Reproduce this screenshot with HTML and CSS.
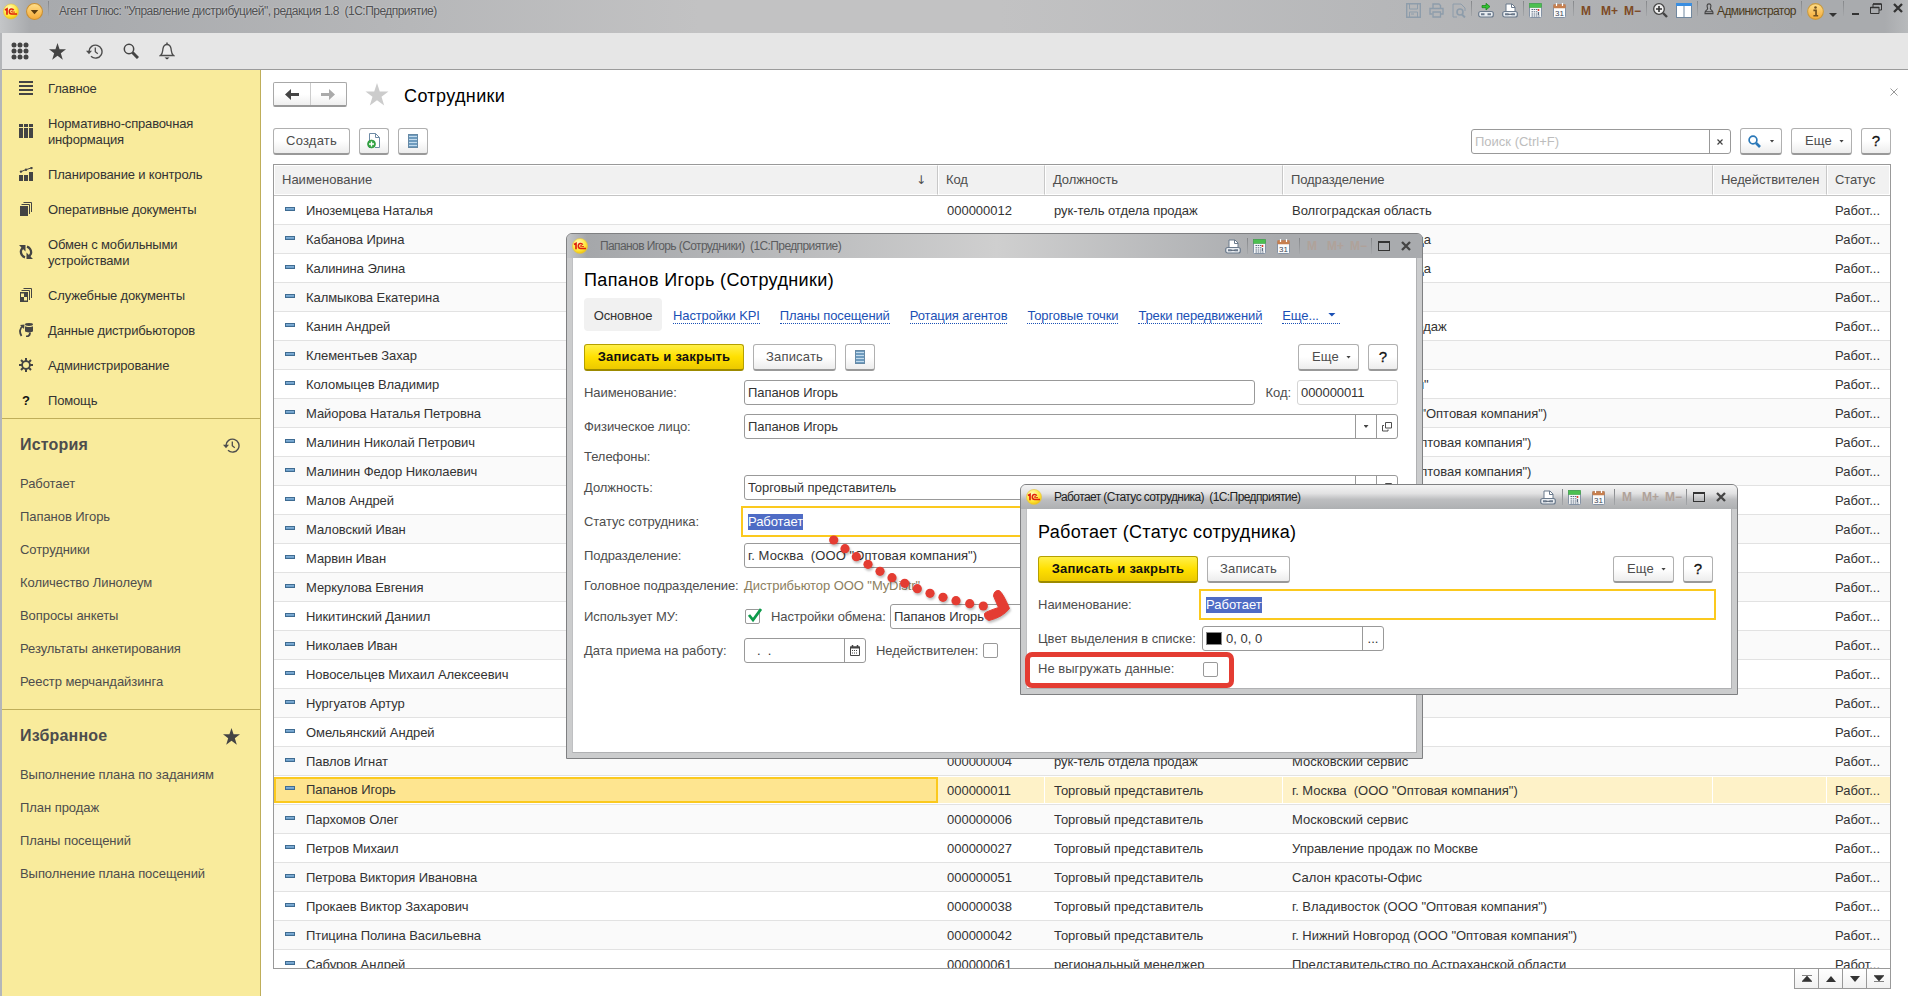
FILE: index.html
```html
<!DOCTYPE html>
<html lang="ru">
<head>
    <meta charset="UTF-8">
    <title>Агент Плюс: Сотрудники</title>
    <link rel="stylesheet" href="styles.css">
</head>
<body>
<svg class="defs" width="0" height="0">
    <defs>
        <radialGradient id="gold" cx=".4" cy=".3" r=".8"><stop offset="0" stop-color="#fffbc0"/><stop offset=".6" stop-color="#ffe638"/><stop offset="1" stop-color="#e8b400"/></radialGradient>
        <linearGradient id="orange" x1="0" y1="0" x2="0" y2="1"><stop offset="0" stop-color="#ffdf8a"/><stop offset="1" stop-color="#f5a936"/></linearGradient>
        <linearGradient id="blue" x1="0" y1="0" x2="0" y2="1"><stop offset="0" stop-color="#8fb8dc"/><stop offset="1" stop-color="#5f96c4"/></linearGradient>
    </defs>
    <symbol id="logo" viewBox="0 0 16 16"><circle cx="8" cy="8" r="7.6" fill="url(#gold)" stroke="#e2c24a" stroke-width=".6"/><path d="M2 6.500 4 5.500v5.700" fill="none" stroke="#e0200c" stroke-width="1.700"/><path d="M10.700 6.800C10 5 6.300 4.800 6.300 8c0 2 1.200 2.500 2.400 2.500H14" fill="none" stroke="#e0200c" stroke-width="1.500"/><path d="M10 7.800c-.6-.6-1.600-.4-1.600.2 0 .5.3.6.800.6H12" fill="none" stroke="#e0200c" stroke-width=".9"/></symbol>
    <symbol id="star" viewBox="0 0 24 24"><path d="M12 0l2.900 8.800H24l-7.300 5.500L19.500 23.500 12 18l-7.500 5.500 2.800-9.200L0 8.800h9.100z"/></symbol>
    <symbol id="history" viewBox="0 0 17 17"><path d="M3 8.500a6.500 6.500 0 1 1 2 4.800" fill="none" stroke="#4d4d4d" stroke-width="1.400"/><path d="M0 7.800h6L3 11.300z" fill="#4d4d4d"/><path d="M9.300 4.500v4.300l2.500 2" fill="none" stroke="#4d4d4d" stroke-width="1.300"/></symbol>
    <symbol id="printer" viewBox="0 0 16 15"><path d="M4 8V1h6l3 3v4" fill="#fff" stroke="#6b7a8c"/><path d="M9.500 1v3.500H13" fill="none" stroke="#6b7a8c"/><rect x=".7" y="8.500" width="14.600" height="5.500" rx="2" fill="#e8ecf0" stroke="#6b7a8c" stroke-width="1.200"/><path d="M3 11.300h3.500M9.500 11.300H13" stroke="#6b7a8c" stroke-width="2"/><path d="M6 11.300h4" stroke="#4d5b6c"/></symbol>
    <symbol id="linkgo" viewBox="0 0 16 15"><path d="M4 2.500h4V.3L12 3.600 8 7V4.700H4z" fill="#2fc42f" stroke="#168016" stroke-width=".7"/><rect x=".7" y="8.500" width="14.600" height="5.500" rx="2" fill="#e8ecf0" stroke="#6b7a8c" stroke-width="1.200"/><path d="M3 11.300h3.500M9.500 11.300H13" stroke="#6b7a8c" stroke-width="2"/></symbol>
    <symbol id="calc" viewBox="0 0 13 15"><rect x=".5" y=".5" width="12" height="14" rx="1" fill="#f4f6f8" stroke="#8492a4"/><rect x=".5" y=".5" width="12" height="4" fill="#4cc050" stroke="#3ca044" stroke-width=".6"/><path d="M2.500 6.500h6M2.500 8.800h6M2.500 11h6M2.500 13h8" stroke="#5c6c80" stroke-dasharray="1.500 .7"/><path d="M9.500 6v2" stroke="#e04030" stroke-width="1.500"/><path d="M9.500 9v3" stroke="#5c6c80" stroke-width="1.200"/></symbol>
    <symbol id="cal" viewBox="0 0 13 15"><rect x=".5" y="1.500" width="12" height="13" rx="1" fill="#fafbfc" stroke="#8492a4"/><rect x=".3" y="1.200" width="12.400" height="4" rx=".8" fill="#c77f4e"/><path d="M3.500 0v3M9.500 0v3" stroke="#fff" stroke-width="1.200"/><text x="6.500" y="12.800" font-size="8" text-anchor="middle" fill="#3c4654" font-family="Liberation Sans">31</text></symbol>
    <symbol id="list" viewBox="0 0 10 14"><rect x=".5" y=".5" width="9" height="13" fill="#6f9cbf" stroke="#6689a5"/><path d="M1 2.500h8M1 5.500h8M1 8.500h8M1 11.500h8" stroke="#c3dbed" stroke-width="1.200"/></symbol>
    <symbol id="open" viewBox="0 0 10 10"><path d="M3.500.5h6v5.500h-6z M2 3.500H.5v5.500h5.500V7.500" fill="none" stroke="#4d4d4d"/></symbol>
</svg>

<div class="app">
    <header class="titlebar">
        <svg class="app-logo"><use href="#logo"/></svg>
        <svg class="app-menu" viewBox="0 0 16 16"><circle cx="8" cy="8" r="7.500" fill="url(#orange)" stroke="#c98f33"/><path d="M4.500 6.500h7L8 10.500z" fill="#5c3d10"/></svg>
        <span class="sep"></span>
        <span class="app-title">Агент Плюс: "Управление дистрибуцией", редакция 1.8&nbsp; (1С:Предприятие)</span>
        <div class="tools">
            <svg class="faded" width="15" height="15" viewBox="0 0 15 15" fill="none" stroke="#5f7f9c"><path d="M.7.700h13.600v13.600H.7z" stroke-width="1.400"/><path d="M3.500 1v5h8V1M3.500 14V9h8v5M5 11h3"/></svg>
            <svg class="faded gap8" width="15" height="15" viewBox="0 0 15 15" fill="none" stroke="#5f7f9c"><path d="M4 5V1h6l1.500 1.500V5M3.500 11H1V5.500h13V11h-2.500" stroke-width="1.400"/><path d="M4 9h7.500v5H4z" stroke-width="1.300"/></svg>
            <svg class="faded gap8" width="14" height="15" viewBox="0 0 14 15" fill="none" stroke="#5f7f9c"><path d="M5 14H1V1h8l4 4v3"/><circle cx="8" cy="9" r="3" stroke-width="1.600"/><path d="M10 11.500l3 3" stroke-width="2"/></svg>
            <span class="sep s1"></span>
            <svg class="gap6" width="16" height="15"><use href="#linkgo"/></svg>
            <svg class="gap8" width="16" height="15"><use href="#printer"/></svg>
            <span class="sep s2"></span>
            <svg class="gap5" width="13" height="15"><use href="#calc"/></svg>
            <svg class="gap11" width="13" height="15"><use href="#cal"/></svg>
            <span class="sep s3"></span>
            <span class="mem m1">M</span><span class="mem m2">M+</span><span class="mem m3">M−</span>
            <span class="sep s4"></span>
            <svg class="gap6" width="15" height="15" viewBox="0 0 15 15"><circle cx="6" cy="6" r="5.300" fill="#eee" stroke="#444" stroke-width="1.300"/><path d="M3 6h6M6 3v6" stroke="#333" stroke-width="1.600"/><path d="M10 10l4 4" stroke="#444" stroke-width="2.400"/></svg>
            <svg class="gap8" width="16" height="15" viewBox="0 0 16 15"><rect x=".5" y=".5" width="15" height="14" fill="#fff" stroke="#71889f"/><path d="M0 1.500h16" stroke="#3a8ee0" stroke-width="3"/><path d="M8 3v12" stroke="#71889f"/></svg>
            <span class="sep s5"></span>
            <svg class="gap6" width="10" height="12" viewBox="0 0 10 13" fill="none" stroke="#444" stroke-width="1.200"><path d="M5 1C2 1 3 4 3.500 6 3.700 8 .700 7.500.700 10.500v1h8.600v-1C9.300 7.500 6.300 8 6.500 6 7 4 8 1 5 1zM1 9.500h8"/></svg>
            <span class="user">Администратор</span>
            <span class="sep s6"></span>
            <svg class="gap5" width="17" height="17" viewBox="0 0 16 16"><circle cx="8" cy="8" r="7.400" fill="url(#orange)" stroke="#c99a3f"/><path d="M6 7h2.500v5M6 12h4.500" fill="none" stroke="#705020" stroke-width="1.600"/><circle cx="8" cy="4.300" r="1.200" fill="#705020"/></svg>
            <svg class="gap5 low" width="8" height="4" viewBox="0 0 8 4"><path d="M0 0h8L4 4z" fill="#333"/></svg>
            <span class="sep s7"></span>
            <svg class="gap8 low2" width="7" height="2"><path d="M0 0h7v2H0z" fill="#333"/></svg>
            <svg class="gap12" width="12" height="11" viewBox="0 0 12 11" fill="none" stroke="#333"><path d="M3 4V1h8.500v6H9" /><path d="M3 1h8.500M.5 4.500h8.500" stroke-width="1.500"/><path d="M.5 4v6.500H9V4"/></svg>
            <svg class="gap12" width="10" height="10" viewBox="0 0 10 10"><path d="M1 1l8 8M9 1L1 9" stroke="#333" stroke-width="2.300"/></svg>
        </div>
    </header>

    <div class="toolbar">
        <svg width="18" height="18" viewBox="0 0 18 18" fill="#444"><circle cx="3" cy="3" r="2.500"/><circle cx="9" cy="3" r="2.500"/><circle cx="15" cy="3" r="2.500"/><circle cx="3" cy="9" r="2.500"/><circle cx="9" cy="9" r="2.500"/><circle cx="15" cy="9" r="2.500"/><circle cx="3" cy="15" r="2.500"/><circle cx="9" cy="15" r="2.500"/><circle cx="15" cy="15" r="2.500"/></svg>
        <svg width="17" height="17" fill="#444"><use href="#star"/></svg>
        <svg width="17" height="17"><use href="#history"/></svg>
        <svg width="16" height="16" viewBox="0 0 16 16" fill="none" stroke="#444"><circle cx="6" cy="6" r="4.700" stroke-width="1.500"/><path d="M9.500 9.500l5.500 5.500" stroke-width="3"/></svg>
        <svg width="16" height="18" viewBox="0 0 16 18"><path d="M1.500 13.500C4 11.500 3.500 9 4 6.500 4.500 4 6 2.500 8 2.500s3.500 1.500 4 4c.5 2.500 0 5 2.500 7z" fill="#ececec" stroke="#4d4d4d" stroke-width="1.300"/><path d="M8 .5v2" stroke="#4d4d4d" stroke-width="1.500"/><path d="M5.500 15.500h5L8 17.500z" fill="#333"/></svg>
    </div>

    <div class="workspace">
        <nav class="sidebar">
            <ul class="sections">
                <li><svg viewBox="0 0 14 14"><path d="M0 1h14M0 5h14M0 9h14M0 13h14" stroke="#444" stroke-width="2"/></svg><span>Главное</span></li>
                <li><svg viewBox="0 0 14 14" fill="#444"><path d="M0 0h4v3H0zM5 0h4v3H5zM10 0h4v3h-4zM0 4h4v10H0zM5 4h4v10H5zM10 4h4v10h-4z"/></svg><span>Нормативно-справочная<br>информация</span></li>
                <li><svg viewBox="0 0 14 14" fill="#444"><path d="M0 8h4v6H0zM5 8h4v6H5zM10 5h4v9h-4z"/><path d="M1 5l5-2 6-2" fill="none" stroke="#444"/><circle cx="2" cy="4.600" r="1.200"/><circle cx="7" cy="2.800" r="1.200"/><circle cx="12.500" cy="1" r="1.200"/></svg><span>Планирование и контроль</span></li>
                <li><svg viewBox="0 0 14 14"><path d="M1 4h8v10H1z" fill="#444"/><path d="M2.500 2.500h8V12M4.500.500h8V10" fill="none" stroke="#444"/></svg><span>Оперативные документы</span></li>
                <li><svg viewBox="0 0 14 14"><path d="M5.500 1.800C2 3 .800 7 3 10.200c.8 1.200 1.700 1.800 3 2.200M8.500 12.200C12 11 13.200 7 11 3.800 10.200 2.600 9.300 2 8 1.600" fill="none" stroke="#444" stroke-width="2.300"/><path d="M0 0h6.500v6.500zM14 14H7.500V7.500z" fill="#444"/></svg><span>Обмен с мобильными<br>устройствами</span></li>
                <li><svg viewBox="0 0 14 14"><path d="M1 4h8v10H1z" fill="#444"/><path d="M2 5.500h3V9H2zM5 9h3v3.500H5z" fill="#f9eb9c"/><path d="M2.500 2.500h8V12M4.500.500h8V10" fill="none" stroke="#444"/></svg><span>Служебные документы</span></li>
                <li><svg viewBox="0 0 14 14"><path d="M4 3C.5 5 .2 9.500 2.500 13M7 13.500c3 0 4-2 4-4" fill="none" stroke="#444" stroke-width="1.800"/><path d="M1 2l4.500-.5L5 6z" fill="#444"/><ellipse cx="10" cy="1.500" rx="4" ry="1.400" fill="#444"/><path d="M6 3.300c1 1 7 1 8 0v5c-1 1.500-7 1.500-8 0z" fill="#444"/></svg><span>Данные дистрибьюторов</span></li>
                <li><svg viewBox="0 0 14 14"><circle cx="7" cy="7" r="3.900" fill="none" stroke="#444" stroke-width="1.800"/><path d="M7 0v3M7 11v3M0 7h3M11 7h3M2 2l2.200 2.200M9.800 9.800L12 12M12 2L9.800 4.200M4.200 9.800L2 12" stroke="#444" stroke-width="2"/></svg><span>Администрирование</span></li>
                <li><b class="help">?</b><span>Помощь</span></li>
            </ul>
            <section class="side-block history">
                <h2>История<svg width="17" height="17"><use href="#history"/></svg></h2>
                <ul>
                    <li>Работает</li>
                    <li>Папанов Игорь</li>
                    <li>Сотрудники</li>
                    <li>Количество Линолеум</li>
                    <li>Вопросы анкеты</li>
                    <li>Результаты анкетирования</li>
                    <li>Реестр мерчандайзинга</li>
                </ul>
            </section>
            <section class="side-block">
                <h2>Избранное<svg width="17" height="17" fill="#444"><use href="#star"/></svg></h2>
                <ul>
                    <li>Выполнение плана по заданиям</li>
                    <li>План продаж</li>
                    <li>Планы посещений</li>
                    <li>Выполнение плана посещений</li>
                </ul>
            </section>
        </nav>

        <main class="content">
            <div class="page-head">
                <div class="nav-buttons">
                    <span><svg width="14" height="11" viewBox="0 0 14 11"><path d="M0 5.500L6 0v4h8v3H6v4z" fill="#444"/></svg></span>
                    <span><svg width="14" height="11" viewBox="0 0 14 11"><path d="M14 5.500L8 0v4H0v3h8v4z" fill="#aaa"/></svg></span>
                </div>
                <svg class="fav" width="24" height="23" fill="#ccc"><use href="#star"/></svg>
                <h1>Сотрудники</h1>
                <svg class="page-close" width="8" height="8" viewBox="0 0 8 8"><path d="M.5.500l7 7M7.500.500l-7 7" stroke="#999"/></svg>
            </div>
            <div class="commands">
                <button class="btn create">Создать</button>
                <button class="btn icon-btn"><svg width="14" height="16" viewBox="0 0 14 16"><path d="M2.500 15V.5h6L12.500 4.500V14.500H8" fill="#fff" stroke="#6e8ba5"/><path d="M8.500.500v4h4" fill="none" stroke="#6e8ba5"/><circle cx="4.500" cy="11" r="4" fill="#37a846" stroke="#1e8a30" stroke-width=".6"/><path d="M2 11h5M4.500 8.500v5" stroke="#fff" stroke-width="1.300"/></svg></button>
                <button class="btn icon-btn"><svg width="10" height="14"><use href="#list"/></svg></button>
                <div class="search"><span>Поиск (Ctrl+F)</span><i><svg width="6" height="6" viewBox="0 0 6 6"><path d="M.5.500l5 5M5.500.500l-5 5" stroke="#444" stroke-width="1.200"/></svg></i></div>
                <button class="btn find"><svg width="13" height="13" viewBox="0 0 13 13" fill="none" stroke="#2a78b8"><circle cx="5" cy="5" r="3.900" stroke-width="1.700"/><path d="M8 8l4 4" stroke-width="2.600"/></svg><em class="caret"></em></button>
                <button class="btn more">Еще<em class="caret"></em></button>
                <button class="btn ask">?</button>
            </div>
            <div class="table">
                <div class="row head">
                    <div>Наименование<span class="sort">↓</span></div><div>Код</div><div>Должность</div><div>Подразделение</div><div>Недействителен</div><div>Статус</div>
                </div>
                <div id="rows"></div>
            </div>
            <div class="pager">
                <span><svg width="10" height="7"><path d="M0 .5h10M0 6.500h10L5 1z" fill="#333" stroke="#333" stroke-width=".6"/></svg></span>
                <span><svg width="10" height="6"><path d="M0 6h10L5 0z" fill="#333"/></svg></span>
                <span><svg width="10" height="6"><path d="M0 0h10L5 6z" fill="#333"/></svg></span>
                <span><svg width="10" height="7"><path d="M0 6.500h10M0 .5h10L5 6z" fill="#333" stroke="#333" stroke-width=".6"/></svg></span>
            </div>
        </main>
    </div>
</div>

<div class="window employee">
    <div class="win-title">
        <svg class="win-logo"><use href="#logo"/></svg>
        <span class="win-name">Папанов Игорь (Сотрудники)&nbsp; (1С:Предприятие)</span>
        <div class="win-tools">
            <svg width="16" height="15"><use href="#printer"/></svg><span class="sep s2"></span>
            <svg class="gap5" width="13" height="15"><use href="#calc"/></svg><svg class="gap11" width="13" height="15"><use href="#cal"/></svg>
            <span class="sep w3"></span>
            <span class="mem off m1">M</span><span class="mem off m2">M+</span><span class="mem off m3">M−</span>
            <span class="sep w4"></span>
            <span class="maximize"></span>
            <svg class="win-close" width="10" height="10" viewBox="0 0 10 10"><path d="M1 1l8 8M9 1L1 9" stroke="#444" stroke-width="2.300"/></svg>
        </div>
    </div>
    <div class="win-body">
        <h1>Папанов Игорь (Сотрудники)</h1>
        <div class="tabs">
            <span class="active">Основное</span><a>Настройки KPI</a><a>Планы посещений</a><a>Ротация агентов</a><a>Торговые точки</a><a>Треки передвижений</a><a>Еще...<em class="tab-caret"></em></a>
        </div>
        <div class="commands">
            <button class="btn primary">Записать и закрыть</button>
            <button class="btn save">Записать</button>
            <button class="btn icon-btn"><svg width="10" height="14"><use href="#list"/></svg></button>
            <button class="btn more">Еще<em class="caret"></em></button>
            <button class="btn ask">?</button>
        </div>
        <div class="form">
            <div class="field"><label>Наименование:</label><div class="input grow">Папанов Игорь</div><label class="code-label">Код:</label><div class="input code">000000011</div></div>
            <div class="field"><label>Физическое лицо:</label><div class="input grow">Папанов Игорь<i class="first"><em class="caret"></em></i><i><svg width="10" height="10"><use href="#open"/></svg></i></div></div>
            <div class="field short"><label>Телефоны:</label></div>
            <div class="field"><label>Должность:</label><div class="input grow">Торговый представитель<i class="first"><em class="caret"></em></i><i><svg width="10" height="10"><use href="#open"/></svg></i></div></div>
            <div class="field"><label>Статус сотрудника:</label><div class="input grow focus"><mark>Работает</mark></div></div>
            <div class="field"><label>Подразделение:</label><div class="input grow wide">г. Москва&nbsp; (ООО "Оптовая компания")</div></div>
            <div class="field short"><label>Головное подразделение:</label><span class="readonly">Дистрибьютор ООО "MyDistr"</span></div>
            <div class="field"><label>Использует МУ:</label><span class="check"><svg width="15" height="16" viewBox="0 0 15 16"><path d="M2 7l4 5 8-11" fill="none" stroke="#0c9a4a" stroke-width="2.800"/></svg></span><label class="exchange">Настройки обмена:</label><div class="input grow">Папанов Игорь</div></div>
            <div class="field"><label>Дата приема на работу:</label><div class="input date">&nbsp; .&nbsp; .<i class="first"><svg width="10" height="11" viewBox="0 0 10 11"><path d="M.5 2h9v8.500h-9z" fill="none" stroke="#444"/><path d="M0 2.500h10" stroke="#444" stroke-width="2"/><path d="M2.500 0v2M7.500 0v2" stroke="#444" stroke-width="1.500"/><path d="M2 5.500h6M2 8h6" stroke="#444" stroke-dasharray="1 1"/></svg></i></div><label class="invalid">Недействителен:</label><span class="check"></span></div>
        </div>
    </div>
</div>

<svg class="pointer" width="190" height="90" viewBox="828 532 190 90">
    <g fill="#e43c32"><circle cx="833.700" cy="540" r="4.600"/><circle cx="845" cy="548.700" r="4.600"/><circle cx="856.300" cy="556.700" r="4.600"/><circle cx="868" cy="564.300" r="4.600"/><circle cx="880" cy="571.300" r="4.600"/><circle cx="892" cy="577.700" r="4.600"/><circle cx="904.700" cy="583.300" r="4.600"/><circle cx="917.300" cy="588.700" r="4.600"/><circle cx="930" cy="593.300" r="4.600"/><circle cx="943" cy="597.300" r="4.600"/><circle cx="956" cy="600.700" r="4.600"/><circle cx="969.700" cy="603.700" r="4.600"/><circle cx="983.300" cy="606" r="4.600"/></g>
    <path d="M993.500 596Q994 590 999 590.500 1002.500 592 1009.500 608.500 1003 617 989 620.500 984 619 984.500 613.500 986 611.500 998.500 607.500z" fill="#e43c32" stroke="#e43c32" stroke-linejoin="round"/>
</svg>

<div class="window status">
    <div class="win-title">
        <svg class="win-logo"><use href="#logo"/></svg>
        <span class="win-name">Работает (Статус сотрудника)&nbsp; (1С:Предприятие)</span>
        <div class="win-tools">
            <svg width="16" height="15"><use href="#printer"/></svg><span class="sep s2"></span>
            <svg class="gap5" width="13" height="15"><use href="#calc"/></svg><svg class="gap11" width="13" height="15"><use href="#cal"/></svg>
            <span class="sep w3"></span>
            <span class="mem off m1">M</span><span class="mem off m2">M+</span><span class="mem off m3">M−</span>
            <span class="sep w4"></span>
            <span class="maximize"></span>
            <svg class="win-close" width="10" height="10" viewBox="0 0 10 10"><path d="M1 1l8 8M9 1L1 9" stroke="#444" stroke-width="2.300"/></svg>
        </div>
    </div>
    <div class="win-body">
        <h1>Работает (Статус сотрудника)</h1>
        <div class="commands">
            <button class="btn primary">Записать и закрыть</button>
            <button class="btn save">Записать</button>
            <button class="btn more">Еще<em class="caret"></em></button>
            <button class="btn ask">?</button>
        </div>
        <div class="form">
            <div class="field"><label>Наименование:</label><div class="input grow focus"><mark>Работает</mark></div></div>
            <div class="field"><label>Цвет выделения в списке:</label><div class="input color"><span class="swatch"></span>0, 0, 0<i class="first">...</i></div></div>
            <div class="field short"><label>Не выгружать данные:</label><span class="check"></span></div>
        </div>
    </div>
</div>
<div class="highlight"></div>

<script>
    const agent = "Торговый представитель";
    const employees = [
        ["Иноземцева Наталья", "000000012", "рук-тель отдела продаж", "Волгоградская область"],
        ["Кабанова Ирина", "", "", "Управление&nbsp; г. Вологда"],
        ["Калинина Элина", "", "", "Управление&nbsp; г. Вологда"],
        ["Калмыкова Екатерина", "", "", ""],
        ["Канин Андрей", "", "", "Управление&nbsp; отд.&nbsp; продаж"],
        ["Клементьев Захар", "", "", ""],
        ["Коломыцев Владимир", "", "", "ООО \"Новый Магазин\""],
        ["Майорова Наталья Петровна", "", "", "г. Владивосток (ООО \"Оптовая компания\")"],
        ["Малинин Николай Петрович", "", "", "г. Волгоград (ООО \"Оптовая компания\")"],
        ["Малинин Федор Николаевич", "", "", "г. Волгоград (ООО \"Оптовая компания\")"],
        ["Малов Андрей", "", "", ""],
        ["Маловский Иван", "", "", ""],
        ["Марвин Иван", "", "", ""],
        ["Меркулова Евгения", "", "", ""],
        ["Никитинский Даниил", "", "", ""],
        ["Николаев Иван", "", "", ""],
        ["Новосельцев Михаил Алексеевич", "", "", ""],
        ["Нургуатов Артур", "", "", ""],
        ["Омельянский Андрей", "", "", "Филиал&nbsp; г. Волгоград"],
        ["Павлов Игнат", "000000004", "рук-тель отдела продаж", "Московский сервис"],
        ["Папанов Игорь", "000000011", agent, "г. Москва&nbsp; (ООО \"Оптовая компания\")"],
        ["Пархомов Олег", "000000006", agent, "Московский сервис"],
        ["Петров Михаил", "000000027", agent, "Управление продаж по Москве"],
        ["Петрова Виктория Ивановна", "000000051", agent, "Салон красоты-Офис"],
        ["Прокаев Виктор Захарович", "000000038", agent, "г. Владивосток (ООО \"Оптовая компания\")"],
        ["Птицина Полина Васильевна", "000000042", agent, "г. Нижний Новгород (ООО \"Оптовая компания\")"],
        ["Сабуров Андрей", "000000061", "региональный менеджер", "Представительство по Астраханской области"]
    ];
    const mark = '<svg class="item" width="10" height="4"><rect x=".5" y=".5" width="9" height="3" fill="url(#blue)" stroke="#3f6c92"/></svg>';
    document.getElementById("rows").innerHTML = employees.map(e =>
        `<div class="row${e[0] === "Папанов Игорь" ? " selected" : ""}"><div>${mark}${e[0]}</div><div>${e[1]}</div><div>${e[2]}</div><div>${e[3]}</div><div></div><div>Работ...</div></div>`
    ).join("");
</script>
</body>
</html>
```
FILE: styles.css
```css
* {
  box-sizing: border-box;
}

body {
  margin: 0;
  width: 1908px;
  height: 996px;
  overflow: hidden;
  font: 13px/16px "Liberation Sans", Arial, sans-serif;
  color: #333;
}

ul, h1, h2 {
  margin: 0;
  padding: 0;
  list-style: none;
}

svg {
  flex: none;
  display: block;
}

em, i {
  font-style: normal;
}

.defs {
  position: absolute;
}

.app {
  display: flex;
  flex-direction: column;
  height: 996px;
  border-left: 2px solid #b4b6b9;
  background: #fff;
}

/* title bar */
.titlebar {
  display: flex;
  align-items: flex-start;
  height: 33px;
  margin-left: -2px;
  padding: 3px 5px 0 3px;
  background: linear-gradient(90deg, #c4c6c8 0, #a8aaad 30px, #a9abae 90px, #c2c2c3 700px, #c2c2c3 1000px, #a9abae 1800px, #a9abae 1885px, #b8babc);
}

.app-logo {
  width: 16px;
  height: 17px;
}

.app-menu {
  width: 17px;
  height: 17px;
  margin-left: 7px;
}

.titlebar .sep {
  height: 15px;
  margin-left: 5px;
  margin-top: -2px;
}

.sep {
  flex: none;
  width: 1px;
  height: 16px;
  background: linear-gradient(#85878a, #a5a7aa);
}

.app-title {
  margin-left: 10px;
  font-size: 12px;
  line-height: 17px;
  letter-spacing: -0.53px;
  color: #4f5052;
  text-shadow: 0 0 2px #ddd;
  white-space: nowrap;
}

.tools, .win-tools {
  display: flex;
  margin-left: auto;
}

.faded {
  opacity: 0.45;
}

.gap5 { margin-left: 5px; }
.gap6 { margin-left: 6px; }
.gap8 { margin-left: 8px; }
.gap11 { margin-left: 11px; }
.gap12 { margin-left: 11px; }
.tools .low { margin-top: 10px; }
.tools .low2 { margin-top: 10px; }
.tools .s1, .tools .s2 { margin-left: 5px; }
.tools .s3 { margin-left: 7px; }
.tools .s4 { margin-left: 5px; }
.tools .s7 { margin-left: 6px; }

.mem {
  flex: none;
  font-weight: bold;
  font-size: 12px;
  line-height: 17px;
  color: #7d4a25;
}

.mem.off {
  color: #b0a29a;
}

.m1 { width: 12px; margin-left: 7px; }
.m2 { width: 17px; margin-left: 8px; }
.m3 { width: 17px; margin-left: 6px; }

.user {
  width: 79px;
  margin-left: 3px;
  font-size: 12px;
  line-height: 17px;
  letter-spacing: -0.6px;
  color: #4a3a20;
}

/* top toolbar */
.toolbar {
  display: flex;
  align-items: center;
  gap: 20px;
  height: 37px;
  padding-left: 9px;
  border-bottom: 1px solid #9b9b9b;
  background: #e6e6e6;
}

.workspace {
  display: flex;
  flex: 1;
  min-height: 0;
}

/* sidebar */
.sidebar {
  flex: none;
  width: 259px;
  background: #f9eb9c;
  border-right: 1px solid #bfae5a;
}

.sections {
  height: 349px;
  border-bottom: 1px solid #bfae5a;
}

.sections li {
  display: flex;
  align-items: center;
  height: 35px;
  padding: 1px 0 0 16px;
  letter-spacing: -0.16px;
}

.sections span {
  padding-top: 1px;
}

.sections li:nth-child(2), .sections li:nth-child(5) {
  height: 51px;
}

.sections svg, .help {
  width: 14px;
  height: 14px;
  margin: 0 15px 0 1px;
}

.help {
  text-align: center;
  line-height: 16px;
  color: #111;
}

.side-block {
  padding: 17px 20px 0 18px;
  letter-spacing: -0.06px;
  color: #4d4d4d;
}

.side-block h2 {
  display: flex;
  justify-content: space-between;
  align-items: center;
  height: 18px;
  margin-bottom: 13px;
  font-size: 16px;
  letter-spacing: 0.2px;
}

.side-block li {
  height: 33px;
  line-height: 33px;
}

.history {
  height: 291px;
  border-bottom: 1px solid #bfae5a;
}

/* list form */
.content {
  flex: 1;
  padding: 12px 17px 0 12px;
}

.page-head {
  display: flex;
  height: 25px;
}

.nav-buttons {
  display: flex;
  width: 74px;
  height: 25px;
  border: 1px solid #a8a8a8;
  border-bottom: 2px solid #999;
  border-radius: 2px;
  background: linear-gradient(#fff 50%, #efefef);
}

.nav-buttons span {
  flex: 1;
  display: flex;
  align-items: center;
  justify-content: center;
}

.nav-buttons span + span {
  border-left: 1px solid #ccc;
}

.fav {
  margin: 1px 15px 0 18px;
}

h1 {
  height: 26px;
  font-size: 18px;
  line-height: 28px;
  font-weight: normal;
  letter-spacing: 0.38px;
  color: #000;
}

.page-close {
  margin: 6px -7px 0 auto;
}

.commands {
  display: flex;
  gap: 9px;
}

.content .commands {
  margin-top: 21px;
}

.btn {
  flex: none;
  display: flex;
  align-items: center;
  justify-content: center;
  height: 27px;
  padding: 0;
  border: 1px solid #b0b0b0;
  border-bottom: 2px solid #999;
  border-radius: 3px;
  background: linear-gradient(#fff 50%, #ededed);
  font: inherit;
  letter-spacing: 0.2px;
  color: #4d4d4d;
}

.create { width: 77px; }
.icon-btn { width: 30px; }
.find { width: 42px; gap: 9px; }
.more { width: 61px; gap: 7px; padding-left: 6px; }
.ask { width: 30px; font-size: 15px; color: #111; -webkit-text-stroke: 0.3px #111; }
.save { width: 83px; }

.primary {
  width: 160px;
  border-color: #b5a000;
  border-bottom-color: #9c8a00;
  background: linear-gradient(#fff04a, #ffe000 50%, #ecc900);
  font-weight: bold;
  color: #111;
}

.caret {
  width: 5px;
  height: 3px;
  background: #444;
  clip-path: polygon(0 0, 100% 0, 50% 100%);
}

.search {
  display: flex;
  width: 260px;
  height: 25px;
  margin: 1px 0 0 auto;
  border: 1px solid #999;
  border-radius: 3px;
  line-height: 23px;
  color: #bdbdbd;
}

.search span {
  flex: 1;
  padding-left: 3px;
}

.search i {
  display: flex;
  width: 21px;
  align-items: center;
  justify-content: center;
  border-left: 1px solid #999;
}

.table {
  height: 805px;
  margin-top: 9px;
  border: 1px solid #999;
  overflow: hidden;
}

.row {
  display: grid;
  grid-template-columns: 664px 107px 238px 430px 114px 63px;
  height: 29px;
  border-bottom: 1px solid #e2e2e2;
  line-height: 30px;
  white-space: nowrap;
}

.row:nth-child(even) {
  background: #fafafa;
}

.row > div {
  padding-left: 9px;
  letter-spacing: -0.02px;
}

.row > div:first-child {
  display: flex;
  align-items: center;
  padding-left: 11px;
  letter-spacing: -0.08px;
}

.row > div:last-child {
  padding-left: 8px;
}

.item {
  margin: -5px 11px 0 0;
}

.head.row {
  height: 31px;
  border-bottom: 1px solid #c4c4c4;
  background: #fff;
  line-height: 28px;
  color: #4d4d4d;
}

.head.row > div {
  padding: 0 0 0 7px;
  border: 1px solid #fff;
  border-right-color: #c8c8c8;
  background: #f1f1f1;
  letter-spacing: -0.1px;
}

.head.row > div:first-child {
  padding-right: 11px;
  justify-content: space-between;
  letter-spacing: 0;
}

.head.row > div:last-child {
  border-right-color: #fff;
}

.sort {
  font-family: "DejaVu Sans", sans-serif;
  font-size: 12px;
}

.row.selected {
  padding: 1px 0;
  line-height: 28px;
  background: #fff;
}

.row.selected > div {
  height: 26px;
  background: #fef2c8;
  border-right: 1px solid #fff;
}

.row.selected > div:first-child {
  padding-left: 9px;
  border: 2px solid #fbc91e;
  background: #fee590;
  line-height: 24px;
}

.row.selected > div:last-child {
  border: 0;
}

.pager {
  display: flex;
  width: 97px;
  height: 21px;
  margin: -1px 0 0 auto;
  border: 1px solid #999;
}

.pager span {
  flex: 1;
  display: flex;
  align-items: center;
  justify-content: center;
  background: linear-gradient(#fff, #f1f1f1);
}

.pager span + span {
  border-left: 1px solid #999;
}

/* child windows */
.window {
  position: absolute;
  padding: 0 5px 5px;
  border: 1px solid #7f8082;
  border-radius: 6px 6px 0 0;
  background: #cbcccd;
}

.employee {
  left: 566px;
  top: 233px;
  width: 857px;
  height: 526px;
}

.status {
  left: 1020px;
  top: 484px;
  width: 718px;
  height: 211px;
}

.win-title {
  display: flex;
  align-items: center;
  height: 24px;
  margin: 0 -5px;
  border-radius: 5px 5px 0 0;
  background: linear-gradient(90deg, #c4c6c8 0, #a5a7aa 20px, #a9abae 60px, #cfcfcf 430px, #a9abae 710px, #a9abae);
}

.status .win-title {
  background: linear-gradient(#f4f4f4, #e2e2e3 35%, #bdbec0 60%, #aeb0b2);
}

.win-logo {
  width: 16px;
  height: 16px;
  margin-left: 5px;
}

.win-name {
  margin-left: 12px;
  font-size: 12px;
  letter-spacing: -0.6px;
  white-space: nowrap;
  color: #5c5d5f;
}

.status .win-name {
  color: #222;
}

.win-tools {
  align-items: center;
  padding-right: 11px;
}

.win-tools .s2 { margin-left: 6px; }
.win-tools .w3 { margin-left: 9px; }
.win-tools .w4 { margin-left: 4px; }

.maximize {
  width: 12px;
  height: 10px;
  margin: 0 11px 0 6px;
  border: 1px solid #333;
  border-top-width: 2px;
}

.win-body {
  height: calc(100% - 24px);
  padding: 8px 18px 0 11px;
  border: 1px solid #b0b1b3;
  border-top: 0;
  border-left-color: #bfc0c2;
  background: #fff;
}

.tabs {
  display: flex;
  align-items: center;
  gap: 20px;
  height: 33px;
  margin-top: 6px;
  letter-spacing: -0.12px;
}

.tabs .active {
  width: 78px;
  height: 33px;
  margin-right: -9px;
  border-radius: 4px;
  background: #f1f1f1;
  line-height: 35px;
  text-align: center;
}

.tabs a {
  padding-top: 2px;
  border-bottom: 1px dotted #1a50b5;
  line-height: 15px;
  color: #1a50b5;
}

.tab-caret {
  display: inline-block;
  width: 8px;
  height: 4px;
  margin: 0 4px 3px 9px;
  background: #1a50b5;
  clip-path: polygon(0 0, 100% 0, 50% 100%);
}

.win-body .commands {
  margin-top: 13px;
}

.employee .commands {
  height: 27px;
}

.win-body .more {
  margin-left: auto;
}

.form {
  display: flex;
  flex-direction: column;
  gap: 9px;
  margin-top: 9px;
}

.field {
  display: flex;
  align-items: center;
  height: 25px;
  color: #4d4d4d;
}

.employee .field {
  letter-spacing: -0.07px;
}

.field.short {
  height: 18px;
}

.field > label:first-child {
  width: 160px;
  white-space: nowrap;
}

.input {
  display: flex;
  align-items: center;
  height: 25px;
  padding-left: 3px;
  border: 1px solid #999;
  border-radius: 3px;
  color: #333;
  white-space: pre;
}

.grow {
  flex: 1;
}

.wide {
  letter-spacing: 0.08px;
}

.input i {
  display: flex;
  align-items: center;
  justify-content: center;
  width: 21px;
  height: 23px;
  border-left: 1px solid #999;
}

.input .first {
  margin-left: auto;
}

.focus {
  height: 31px;
  margin: 0 -3px;
  padding-left: 5px;
  border: 2px solid #fbc91e;
  border-radius: 0;
}

mark {
  background: #4f6cc5;
  color: #fff;
}

.code-label {
  margin: 0 6px 0 11px;
}

.code {
  width: 101px;
  border-color: #d5d5d5;
}

.readonly {
  color: #8c8060;
}

.check {
  width: 15px;
  height: 15px;
  border: 1px solid #999;
  border-radius: 2px;
  margin-left: 1px;
}

.check svg {
  margin: -2px 0 0 1px;
}

.exchange {
  width: 119px;
  margin-left: 11px;
  white-space: nowrap;
}

.date {
  width: 122px;
}

.date::before {
  content: "";
  width: 2px;
}

.invalid {
  width: 106px;
  margin-left: 10px;
}

/* status window form */
.status .win-body h1 {
  margin-top: 2px;
  line-height: 26px;
  letter-spacing: 0.3px;
}

.status .commands {
  margin-top: 11px;
}

.status .form {
  margin-top: 9px;
}

.status .field > label:first-child {
  width: 164px;
}

.color {
  width: 182px;
}

.swatch {
  width: 16px;
  height: 13px;
  margin-right: 4px;
  border: 1px solid #888;
  background: #000;
}

/* annotations */
.pointer {
  position: absolute;
  left: 828px;
  top: 532px;
  filter: drop-shadow(1px 2px 1px rgba(0, 0, 0, 0.25));
}

.highlight {
  position: absolute;
  left: 1025px;
  top: 652px;
  width: 209px;
  height: 36px;
  border: 5px solid #e43c32;
  border-radius: 7px;
}
```
